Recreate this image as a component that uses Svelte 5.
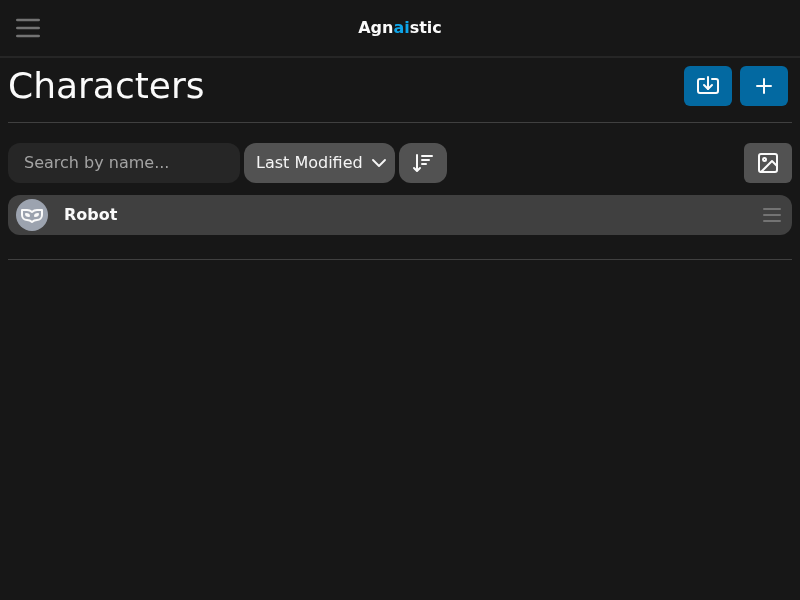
<script>
  let search = '';
</script>

<div class="app">
  <header class="nav">
    <button class="menu" aria-label="Menu">
      <svg width="32" height="32" viewBox="0 0 24 24" fill="none" stroke="currentColor" stroke-width="2" stroke-linecap="round" stroke-linejoin="round">
        <path d="M4 6h16M4 12h16M4 18h16" />
      </svg>
    </button>
    <div class="logo">Agn<span>ai</span>stic</div>
  </header>

  <main class="page">
    <div class="title-row">
      <h1>Characters</h1>
      <div class="actions">
        <button class="btn primary" aria-label="Import">
          <svg width="24" height="24" viewBox="0 0 24 24" fill="none" stroke="currentColor" stroke-width="2" stroke-linecap="round" stroke-linejoin="round">
            <path d="M12 3v12" />
            <path d="m8 11 4 4 4-4" />
            <path d="M8 5H4a2 2 0 0 0-2 2v10a2 2 0 0 0 2 2h16a2 2 0 0 0 2-2V7a2 2 0 0 0-2-2h-4" />
          </svg>
        </button>
        <button class="btn primary" aria-label="Create">
          <svg width="24" height="24" viewBox="0 0 24 24" fill="none" stroke="currentColor" stroke-width="2" stroke-linecap="round" stroke-linejoin="round">
            <path d="M5 12h14" />
            <path d="M12 5v14" />
          </svg>
        </button>
      </div>
    </div>

    <hr class="rule-top" />

    <div class="filters">
      <input class="search" placeholder="Search by name..." bind:value={search} />
      <div class="select">
        <span>Last Modified</span>
        <svg width="16" height="16" viewBox="0 0 16 16" fill="none" stroke="currentColor" stroke-width="1.9" stroke-linecap="round" stroke-linejoin="round">
          <path d="M2 5l6 6 6-6" />
        </svg>
      </div>
      <button class="btn grey sort" aria-label="Sort">
        <svg width="24" height="24" viewBox="0 0 24 24" fill="none" stroke="currentColor" stroke-width="2" stroke-linecap="round" stroke-linejoin="round">
          <path d="M11 5h10" />
          <path d="M11 9h7" />
          <path d="M11 13h4" />
          <path d="m3 17 3 3 3-3" />
          <path d="M6 18V4" />
        </svg>
      </button>
      <button class="btn grey view" aria-label="View">
        <svg width="24" height="24" viewBox="0 0 24 24" fill="none" stroke="currentColor" stroke-width="2" stroke-linecap="round" stroke-linejoin="round">
          <rect x="3" y="3" width="18" height="18" rx="2" ry="2" />
          <circle cx="8.5" cy="8.5" r="1.5" />
          <path d="m21 15-5-5L5 21" />
        </svg>
      </button>
    </div>

    <div class="row">
      <div class="avatar">
        <svg width="24" height="24" viewBox="0 0 24 24" fill="none" stroke="currentColor" stroke-width="2" stroke-linecap="round" stroke-linejoin="round">
          <path d="M2 12a5 5 0 0 0 5 5 8 8 0 0 1 5 2 8 8 0 0 1 5-2 5 5 0 0 0 5-5V7h-5a8 8 0 0 0-5 2 8 8 0 0 0-5-2H2Z" />
          <path d="M6 11c1.5 0 3 .5 3 2-2 0-3 0-3-2Z" />
          <path d="M18 11c-1.5 0-3 .5-3 2 2 0 3 0 3-2Z" />
        </svg>
      </div>
      <span class="name">Robot</span>
      <svg class="handle" width="24" height="24" viewBox="0 0 24 24" fill="none" stroke="currentColor" stroke-width="2" stroke-linecap="round" stroke-linejoin="round">
        <path d="M4 6h16M4 12h16M4 18h16" />
      </svg>
    </div>

    <hr class="rule-bottom" />
  </main>
</div>

<style>
  :global(body) {
    background: #171717;
    color: #f5f5f5;
    font-family: "DejaVu Sans", sans-serif;
    line-height: 24px;
  }

  .app {
    height: 600px;
    overflow: hidden;
    will-change: transform;
  }

  .nav {
    display: flex;
    align-items: center;
    justify-content: center;
    position: relative;
    height: 56px;
    border-bottom: 2px solid #262626;
  }

  .menu {
    position: absolute;
    left: 12px;
    top: 12px;
    display: flex;
    padding: 0;
    border: 0;
    background: none;
    color: #737373;
  }

  .logo {
    font-size: 16px;
    line-height: 24px;
    font-weight: 700;
    color: #fafafa;
  }

  .logo span {
    color: #0ea5e9;
  }

  .page {
    padding: 8px;
  }

  .title-row {
    display: flex;
    align-items: center;
    justify-content: space-between;
    height: 40px;
  }

  h1 {
    margin: 0;
    font-size: 36px;
    font-weight: 400;
    line-height: 40px;
    color: #fafafa;
  }

  .actions {
    display: flex;
    gap: 8px;
    margin-right: 4px;
  }

  .btn {
    display: flex;
    align-items: center;
    justify-content: center;
    width: 48px;
    height: 40px;
    padding: 0;
    border: 0;
    border-radius: 6px;
    color: #fafafa;
  }

  .primary {
    background: #0369a1;
  }

  .grey {
    background: #525252;
  }

  hr {
    height: 1px;
    margin: 0;
    border: 0;
    background: #404040;
  }

  .rule-top {
    margin-top: 16px;
  }

  .filters {
    display: flex;
    gap: 4px;
    margin-top: 20px;
  }

  .search {
    box-sizing: border-box;
    width: 232px;
    height: 40px;
    padding: 0 16px 2px;
    border: 0;
    border-radius: 12px;
    outline: none;
    background: #262626;
    color: #fafafa;
    font: inherit;
    font-size: 16px;
  }

  .search::placeholder {
    color: #a3a3a3;
    opacity: 1;
  }

  .select {
    display: flex;
    align-items: center;
    justify-content: space-between;
    box-sizing: border-box;
    width: 151px;
    height: 40px;
    padding: 0 8px 0 12px;
    border-radius: 12px;
    background: #525252;
    color: #f5f5f5;
    font-size: 16px;
    line-height: 24px;
  }

  .sort {
    border-radius: 12px;
  }

  .row {
    display: flex;
    align-items: center;
    height: 40px;
    margin-top: 12px;
    padding: 0 8px;
    border-radius: 12px;
    background: #404040;
  }

  .view {
    margin-left: auto;
  }

  .avatar {
    display: flex;
    align-items: center;
    justify-content: center;
    flex: none;
    width: 32px;
    height: 32px;
    border-radius: 50%;
    background: #9ca3af;
    color: #fafafa;
  }

  .name {
    margin-left: 16px;
    font-size: 16px;
    line-height: 24px;
    font-weight: 700;
    color: #fafafa;
  }

  .handle {
    margin-left: auto;
    color: #737373;
  }

  .rule-bottom {
    margin-top: 24px;
  }
</style>
